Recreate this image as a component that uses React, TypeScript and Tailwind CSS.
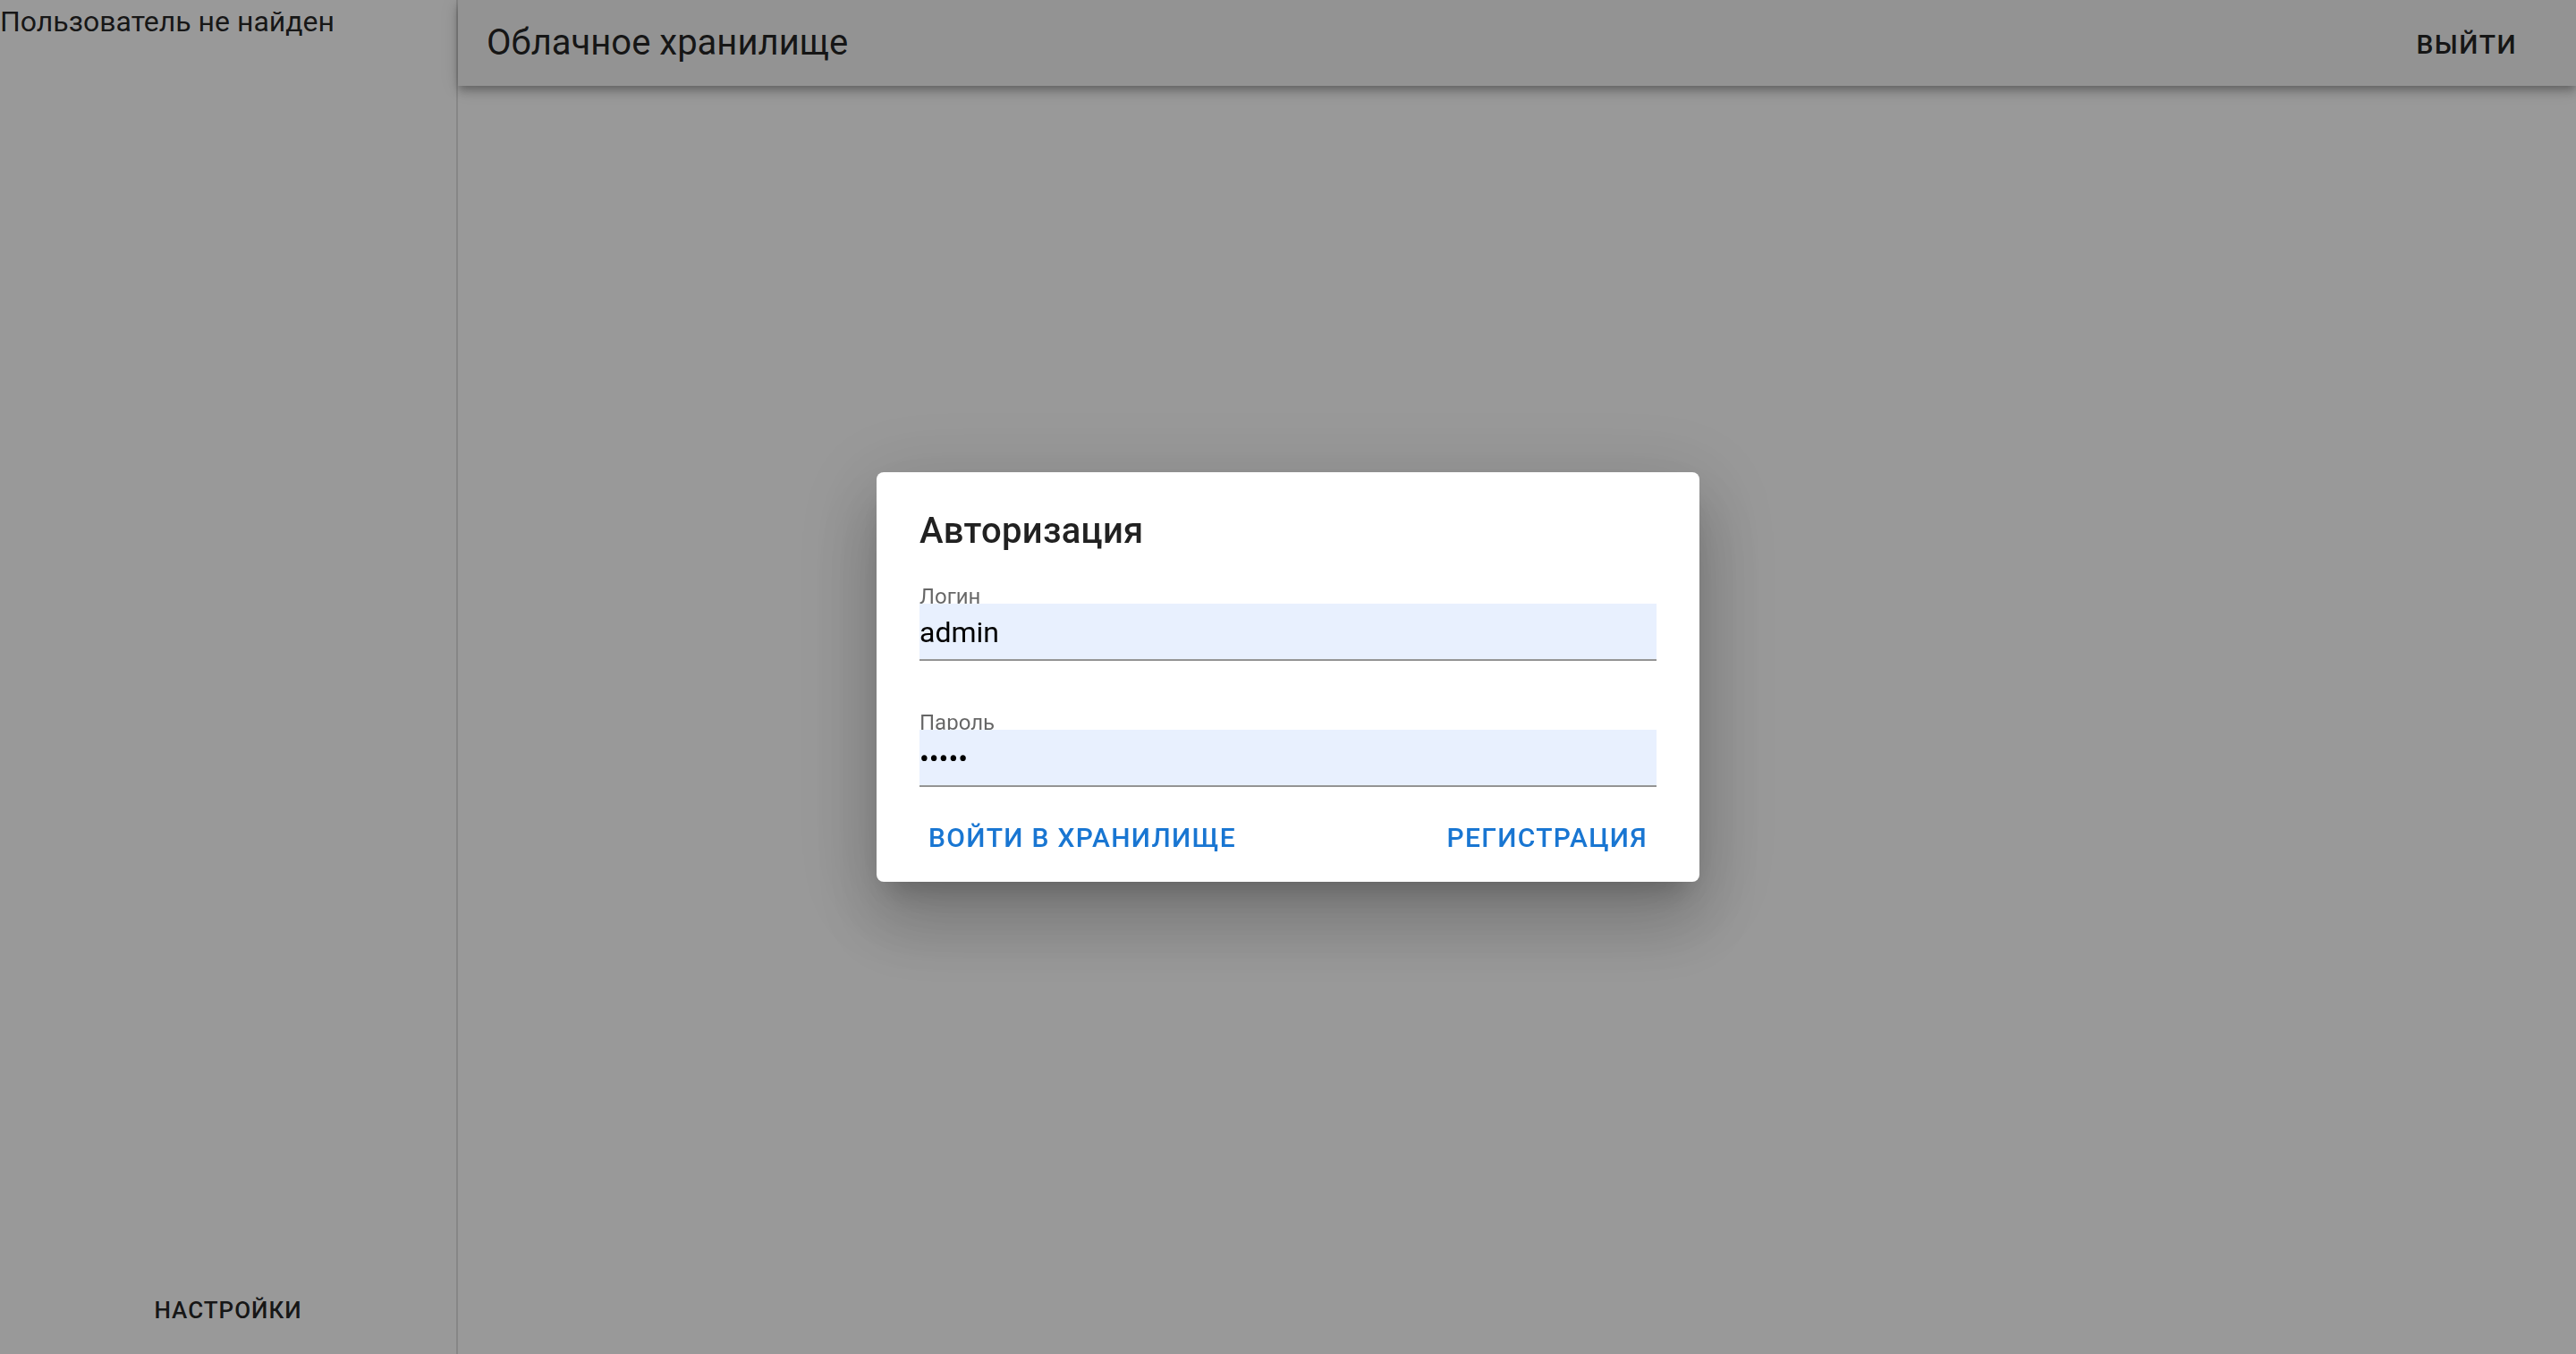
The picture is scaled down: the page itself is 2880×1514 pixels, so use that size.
import { ReactNode } from 'react';

function Sidebar() {
    return (
        <aside className="flex h-full w-[512px] shrink-0 flex-col justify-between border-r-2 border-[rgba(0,0,0,0.12)] bg-white">
            <div className="text-[32px] leading-[48px]">Пользователь не найден</div>
            <div className="mb-[18px] flex justify-center">
                <button className="px-[10px] py-2 text-[26px] leading-[45px] font-medium tracking-[1px] uppercase">
                    Настройки
                </button>
            </div>
        </aside>
    );
}

function Header() {
    return (
        <header className="relative z-10 flex h-[96px] shrink-0 items-center justify-between bg-[#f5f5f5] pr-[50px] pl-8 shadow-[0_4px_8px_-2px_rgba(0,0,0,0.2),0_8px_10px_0_rgba(0,0,0,0.14),0_2px_20px_0_rgba(0,0,0,0.12)]">
            <h1 className="text-[40px] leading-[64px] font-normal">Облачное хранилище</h1>
            <button className="px-[16px] pt-[14px] pb-[10px] text-[30px] leading-[52px] font-medium tracking-[1.4px] uppercase">
                Выйти
            </button>
        </header>
    );
}

interface FieldProps {
    label: string;
    type: string;
    value: string;
    className?: string;
}

function Field({ label, type, value, className = '' }: FieldProps) {
    return (
        <div className={`relative pt-8 ${className}`}>
            <label className="absolute top-[7px] left-0 text-[24px] leading-[34px] text-black/60">
                {label}
            </label>
            <div className="relative h-16 border-b-2 border-[#949494] bg-[#e8f0fe]">
                <input
                    type={type}
                    defaultValue={value}
                    readOnly
                    className="h-full w-full bg-transparent pt-[10px] pb-2 text-[32px] leading-[44px] text-black outline-none"
                />
            </div>
        </div>
    );
}

function TextButton({ children }: { children: ReactNode }) {
    return (
        <button className="rounded-[8px] px-[21px] pt-[18px] pb-[14px] text-[30px] leading-[52px] font-medium tracking-[1.3px] text-[#1976d2] uppercase">
            {children}
        </button>
    );
}

function LoginDialog() {
    return (
        <div className="fixed inset-0 z-20 flex items-center justify-center bg-black/40">
            <div className="w-[920px] rounded-[8px] bg-white shadow-[0_22px_30px_-14px_rgba(0,0,0,0.2),0_48px_76px_6px_rgba(0,0,0,0.14),0_18px_92px_16px_rgba(0,0,0,0.12)]">
                <h2 className="px-12 pt-[34px] text-[40px] leading-[64px] font-medium tracking-[0.3px] text-[rgba(0,0,0,0.87)]">
                    Авторизация
                </h2>
                <div className="px-12">
                    <Field className="mt-[17px]" label="Логин" type="text" value="admin" />
                    <Field className="mt-[45px]" label="Пароль" type="password" value="12345" />
                </div>
                <div className="flex items-center justify-between px-[37px] pt-[13px] pb-[9px]">
                    <TextButton>Войти в хранилище</TextButton>
                    <TextButton>Регистрация</TextButton>
                </div>
            </div>
        </div>
    );
}

export default function App() {
    return (
        <div className="relative flex h-screen w-full overflow-hidden bg-white font-['Roboto',sans-serif] text-[rgba(0,0,0,0.87)]">
            <Sidebar />
            <div className="flex flex-1 flex-col">
                <Header />
                <main className="flex-1" />
            </div>
            <LoginDialog />
        </div>
    );
}
